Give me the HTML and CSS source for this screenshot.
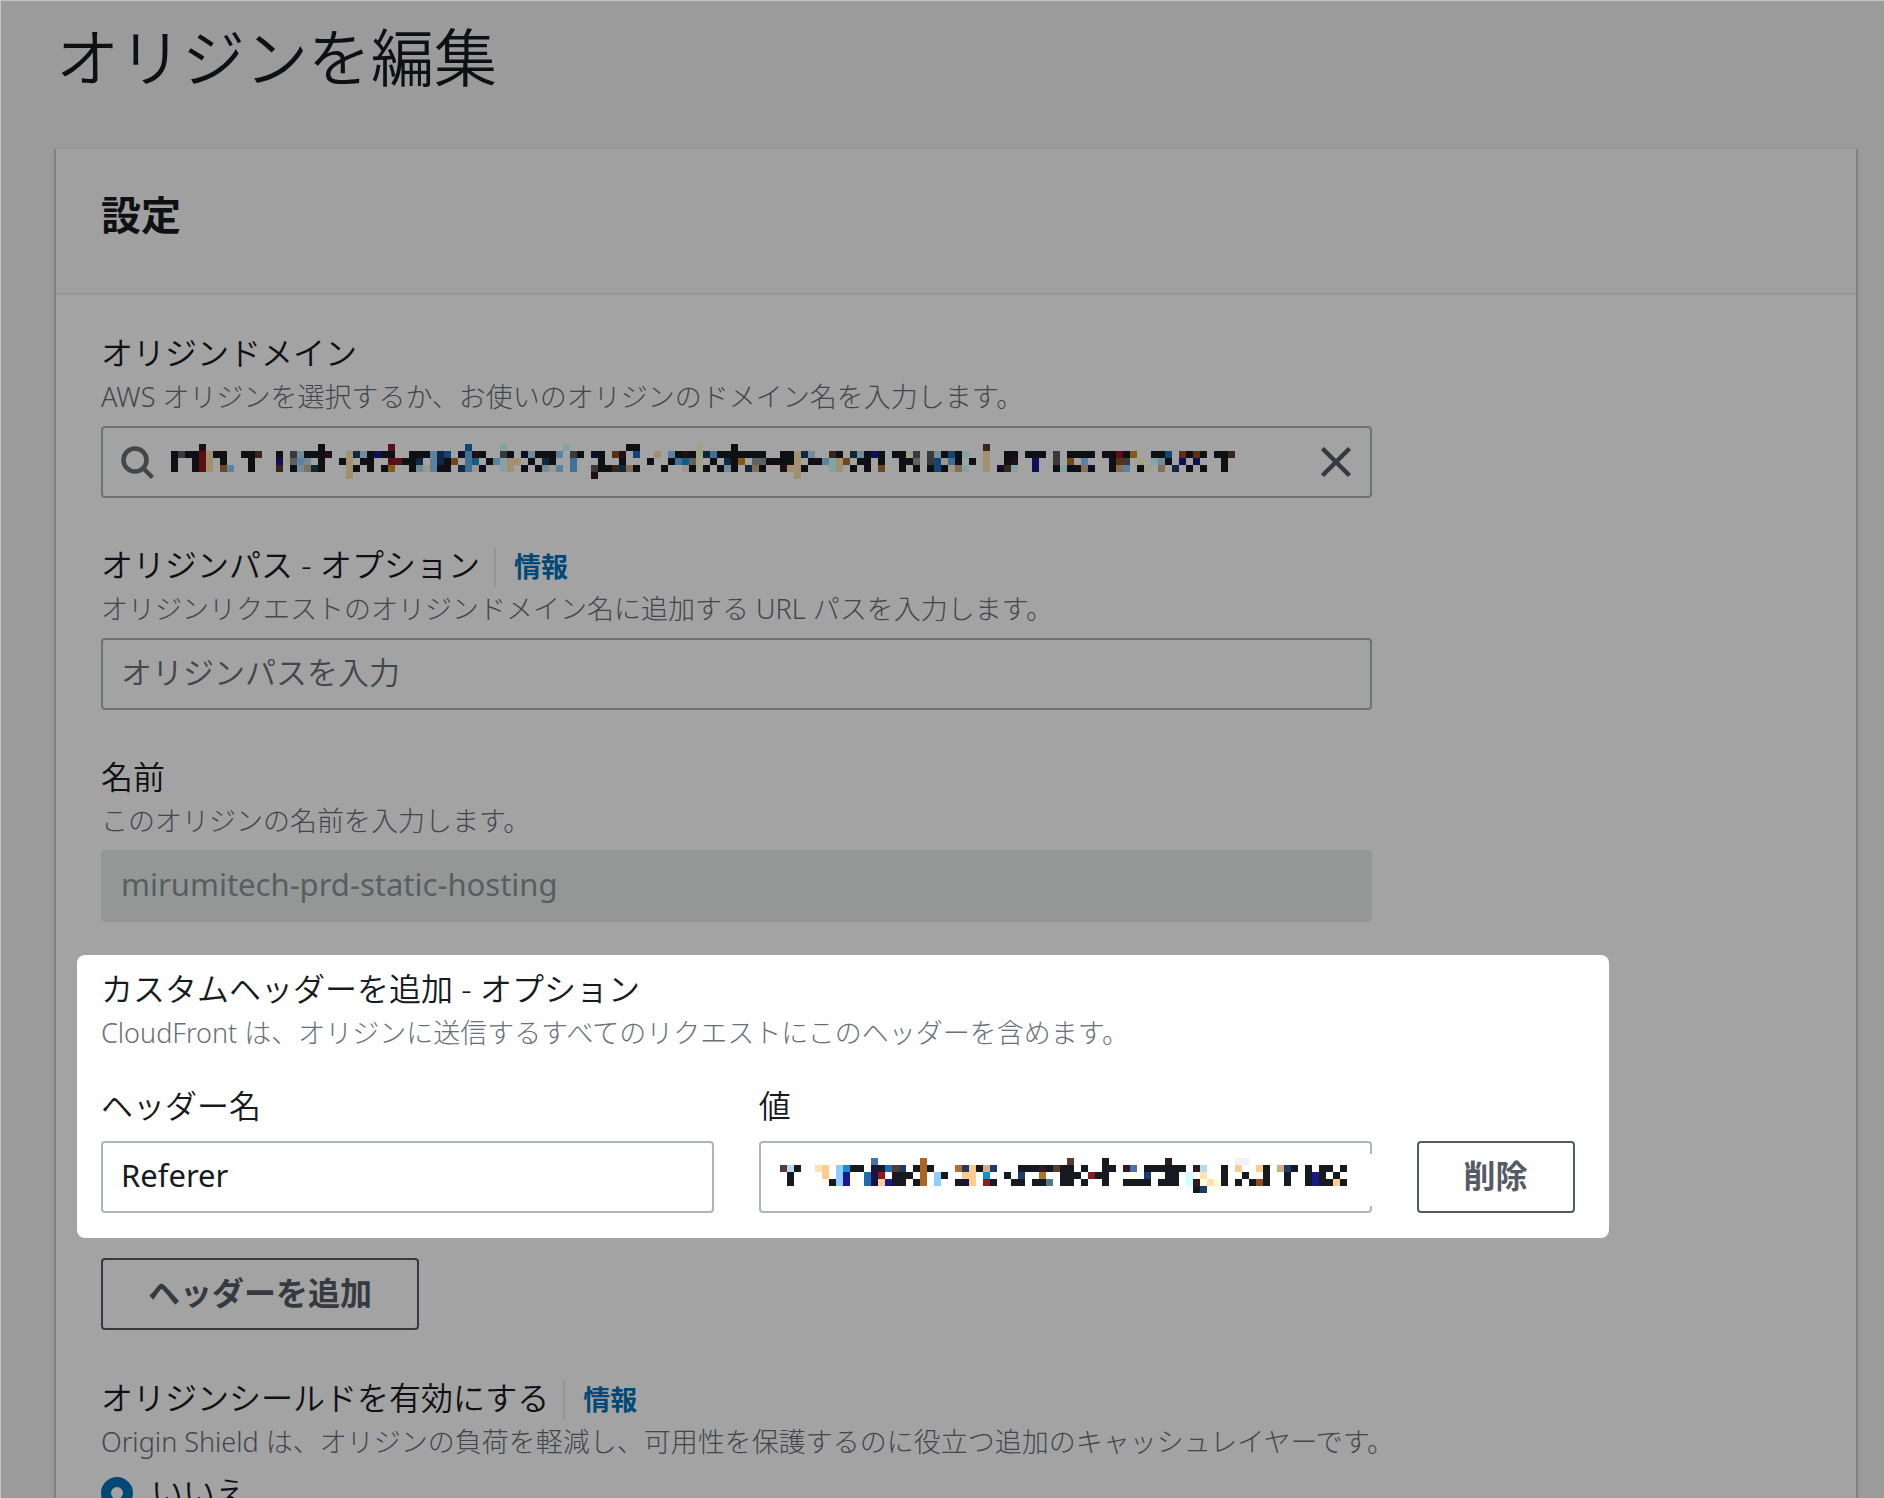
FILE: index.html
```html
<!DOCTYPE html>
<html lang="ja">
<head>
  <meta charset="UTF-8" />
  <meta name="viewport" content="width=device-width, initial-scale=1" />
  <title>オリジンを編集</title>
  <link rel="stylesheet" href="styles.css">
</head>
<body>
  <main class="page">
    <h1>オリジンを編集</h1>
    <form class="panel" id="originForm">
      <div class="panel-header">
        <h2>設定</h2>
      </div>
      <div class="panel-body">
        <div class="field">
          <div class="label-row"><label for="domain">オリジンドメイン</label></div>
          <p class="hint">AWS オリジンを選択するか、お使いのオリジンのドメイン名を入力します。</p>
          <div class="control">
            <input type="text" id="domain" name="domain" />
            <svg class="search-icon" viewBox="0 0 34 34" aria-hidden="true">
              <circle cx="14" cy="14" r="11.5" />
              <path d="M22 22 L31.500 31.500" />
            </svg>
            <svg class="mosaic" id="domainMask" aria-hidden="true"></svg>
            <button type="button" class="clear" aria-label="クリア">
              <svg viewBox="0 0 32 32" aria-hidden="true"><path d="M2.500 2.500 L29.500 29.500 M29.500 2.500 L2.500 29.500" /></svg>
            </button>
          </div>
        </div>

        <div class="field">
          <div class="label-row">
            <label for="path">オリジンパス - オプション</label>
            <a class="info" href="#">情報</a>
          </div>
          <p class="hint">オリジンリクエストのオリジンドメイン名に追加する URL パスを入力します。</p>
          <input type="text" id="path" name="path" placeholder="オリジンパスを入力" />
        </div>

        <div class="field">
          <div class="label-row"><label for="name">名前</label></div>
          <p class="hint">このオリジンの名前を入力します。</p>
          <input type="text" id="name" name="name" value="mirumitech-prd-static-hosting" disabled />
        </div>

        <section class="custom-headers">
          <h3>カスタムヘッダーを追加 - オプション</h3>
          <p class="hint">CloudFront は、オリジンに送信するすべてのリクエストにこのヘッダーを含めます。</p>
          <div class="header-row">
            <div class="header-pair">
              <div class="header-field">
                <label for="headerName">ヘッダー名</label>
                <input type="text" id="headerName" name="headerName" value="Referer" />
              </div>
              <div class="header-field">
                <label for="headerValue">値</label>
                <div class="control">
                  <input type="text" id="headerValue" name="headerValue" />
                  <div class="mask">
                    <svg class="mosaic" id="valueMask" aria-hidden="true"></svg>
                  </div>
                </div>
              </div>
            </div>
            <button type="button" class="btn">削除</button>
          </div>
        </section>

        <button type="button" class="btn">ヘッダーを追加</button>

        <fieldset class="shield">
          <div class="label-row">
            <span id="shieldLabel">オリジンシールドを有効にする</span>
            <a class="info" href="#">情報</a>
          </div>
          <p class="hint">Origin Shield は、オリジンの負荷を軽減し、可用性を保護するのに役立つ追加のキャッシュレイヤーです。</p>
          <label class="radio" for="shieldNo">
            <input type="radio" id="shieldNo" name="shield" value="no" checked />
            いいえ
          </label>
        </fieldset>
      </div>
    </form>
  </main>

  <script src="mosaic.js"></script>
</body>
</html>
```
FILE: styles.css
```css
* {
  box-sizing: border-box;
}
body {
  margin: 0;
  height: 100vh;
  overflow: hidden;
  position: relative;
  background: #f2f3f3;
  color: #16191f;
  font-family: "Noto Sans", "Noto Sans CJK JP", sans-serif;
  font-size: 32px;
  line-height: 44px;
}
/* light hairline round the top left of the window */
body::after {
  content: "";
  position: absolute;
  inset: 0;
  z-index: 3;
  border-top: 1px solid #c4c6c6;
  border-left: 1px solid #c4c6c6;
  pointer-events: none;
}
.page {
  padding: 17px 28px 0 56px;
}
h1 {
  margin: 0 0 50px;
  font-size: 63px;
  font-weight: 350;
  line-height: 80px;
}
h2 {
  margin: 0;
  font-size: 40px;
  font-weight: 700;
  line-height: 56px;
}
h3 {
  margin: 0;
  font-size: 32px;
  font-weight: 350;
  line-height: 44px;
}
.panel {
  background: #fff;
  border-top: 2px solid #eaeded;
  box-shadow: 0 2px 2px rgba(0, 28, 36, 0.3), 2px 2px 2px rgba(0, 28, 36, 0.15), -2px 2px 2px rgba(0, 28, 36, 0.15);
}
.panel-header {
  padding: 38px 45px 50px;
  background: #fafafa;
  border-bottom: 2px solid #eaeded;
}
.panel-body {
  padding: 36px 45px 45px;
}
.field {
  width: calc(75% - 12px);
  margin-bottom: 45px;
}
.label-row {
  display: flex;
  align-items: baseline;
  height: 44px;
  font-weight: 350;
}
label {
  font-weight: 350;
}
.hint {
  margin: 0 0 7px;
  color: #687078;
  font-size: 27px;
  font-weight: 300;
  line-height: 44px;
}
.info {
  margin-left: 14px;
  padding-left: 18px;
  border-left: 2px solid #eaeded;
  color: #0073bb;
  font-size: 27px;
  font-weight: 700;
  line-height: 40px;
  text-decoration: none;
}
input[type="text"] {
  display: block;
  width: 100%;
  height: 72px;
  padding: 0 18px 4px;
  border: 2px solid #aab7b8;
  border-radius: 4px;
  background: #fff;
  color: #16191f;
  font: inherit;
  font-size: 31px;
}
input::placeholder {
  color: #687078;
  font-weight: 350;
  opacity: 1;
}
input[type="text"]:disabled {
  border-color: #eaeded;
  background: #eaeded;
  color: #879596;
}
.control {
  position: relative;
}
.search-icon {
  position: absolute;
  left: 20px;
  top: 20px;
  width: 34px;
  height: 34px;
  fill: none;
  stroke: #687078;
  stroke-width: 4.500;
}
.control > .mosaic {
  position: absolute;
  left: 70px;
  top: 18px;
}
.mosaic {
  display: block;
}
.clear {
  position: absolute;
  right: 20px;
  top: 20px;
  width: 32px;
  height: 32px;
  padding: 0;
  border: none;
  background: none;
  cursor: pointer;
}
.clear svg {
  display: block;
  width: 32px;
  height: 32px;
  fill: none;
  stroke: #545b64;
  stroke-width: 4.500;
}
.mask {
  position: absolute;
  left: 20px;
  right: 0;
  top: 13px;
  height: 52px;
  padding: 4px 0 0 1px;
  background: #fff;
}
.btn {
  height: 72px;
  padding: 0 45px 2px;
  border: 2px solid #545b64;
  border-radius: 4px;
  background: #fff;
  color: #545b64;
  font: inherit;
  font-weight: 700;
  cursor: pointer;
}
.custom-headers {
  position: relative;
  margin-bottom: 45px;
}
/* spotlight: everything outside this box is dimmed */
.custom-headers::after {
  content: "";
  position: absolute;
  z-index: 2;
  left: -24px;
  right: 202px;
  top: -12px;
  bottom: -25px;
  border-radius: 8px;
  box-shadow: 0 0 0 3000px rgba(0, 0, 0, 0.36);
  pointer-events: none;
}
.header-row {
  display: flex;
  align-items: flex-end;
  gap: 45px;
  margin-top: 29px;
}
.custom-headers .hint {
  margin-bottom: 0;
}
.header-pair {
  display: flex;
  gap: 45px;
  width: calc(75% - 12px);
}
.header-field {
  flex: 1;
}
.header-field label {
  display: block;
  margin-bottom: 13px;
}
.shield {
  min-width: 0;
  margin: 46px 0 0;
  padding: 0;
  border: none;
}
.radio {
  display: flex;
  align-items: center;
  gap: 18px;
}
.radio input {
  appearance: none;
  width: 32px;
  height: 32px;
  margin: 0;
  border: 10px solid #0073bb;
  border-radius: 50%;
  background: #fff;
}
```
FILE: mosaic.js
```js
// Pixelated values: each entry is a list of "column:colours" runs for one row
const CELL = 7;
const colors = {
  k: '#16191f', d: '#585c5e', g: '#959699', t: '#ffe2ae', b: '#90ccff', c: '#cfffff',
  n: '#16163c', N: '#1c3d6a', r: '#901820', m: '#321a22', o: '#904c1e', u: '#1c6db8',
  v: '#62b0ee', i: '#181890', y: '#fdfdd4', s: '#b4dcf0', w: '#f6ecdc', e: '#168fd0',
  z: '#b0702e', a: '#ca901e', q: '#583c2e', x: '#d0ae86', T: '#16404e',
  p: '#ffcc90', f: '#fffee8', h: '#f0f0f8', O: '#ae661e', l: '#4a72a6', j: '#4c7c80'
};

const domainRows = [
  '4:m 21:k 31:r 42:u 47:c 56:c 65:kk 75:y 80:k 116:q',
  '0:kdkkrtkk 10:kkq 15:k 17:dskkkm 25:tNskikk 34:kkkbNu 41:nvmk 47:dk 50:nskkkb 57:dk 60:nk 63:om 66:u 69:t 71:bkmkyTvkkkkkkk 87:kktNs 94:qk 97:Tskik 103:kkyd 108:dskukc 116:t 119:kk 122:kkk 126:d 128:kkkk 133:kkrka 140:kku 144:okok 149:kkq',
  '0:k 3:krt 7:k 11:k 15:iygbs 21:k 24:kt 27:kk 31:rrk 34:kN 37:bNkz 42:ve 45:kbctt 51:k 53:Nk 57:v 61:k 64:k 68:k 71:kvegy 77:k 79:Nka 83:ggkkkkt 91:kkbctz 98:kk 101:k 104:kkg 108:duwvk 114:k 116:t 119:km 123:i 126:d 128:z 130:b 134:kod 138:y 140:csk 144:i 146:i 150:k',
  '0:k 3:krt 7:zb 11:k 15:q 17:ksxTk 25:tk 28:k 30:ka 34:kswbkk 41:Nvwn 47:ct 50:k 52:kswb 57:v 60:dkkqNxk 70:k 73:wkyk 78:ksk 82:Nxk 87:mttk 94:ct 97:k 99:k 101:z 104:k 106:k 108:kukwxc 116:t 118:nqc 123:i 126:kckkxn 134:kxb 138:ky 141:x 143:N 145:k 147:k 150:k',
  '25:t 60:m 89:t'
];

const valueRows = [
  '13:l 20:O 41:q 46:k 55:m 65:hh',
  '0:qsk 5:tp 8:bekk 13:nkuqN 19:kOk 25:zNpkxN 34:kkkmkqkk 43:k 46:kk 49:ml 52:kkkkkk 59:ms 63:k 65:p 68:pk 71:xNk 75:k 77:kk 80:k',
  '1:k 6:p 8:bif 12:unr 16:kkk 20:O 22:bk 26:pp 29:e 32:k 34:N 37:z 40:kkk 44:rkk 50:f 52:N 55:kk 58:c 60:t 63:k 66:k 68:fk 72:k 75:kik 79:k',
  '1:k 6:fkbif 12:unpikkfkO 22:b 25:knp 29:rk 33:kk 36:kkj 40:kk 43:k 46:k 49:kkkk 54:kkk 58:cmytyk 65:k 67:kok 72:k 75:kikkpk',
  '59:kN'
];

function drawMosaic(id, rows) {
  const svg = document.getElementById(id);
  let cols = 0;
  rows.forEach((row, y) => {
    row.split(' ').forEach((run) => {
      const [start, cells] = run.split(':');
      [...cells].forEach((cell, i) => {
        const rect = document.createElementNS('http://www.w3.org/2000/svg', 'rect');
        const x = Number(start) + i;
        rect.setAttribute('x', x * CELL);
        rect.setAttribute('y', y * CELL);
        rect.setAttribute('width', CELL);
        rect.setAttribute('height', CELL);
        rect.setAttribute('fill', colors[cell]);
        svg.appendChild(rect);
        cols = Math.max(cols, x + 1);
      });
    });
  });
  svg.setAttribute('width', cols * CELL);
  svg.setAttribute('height', rows.length * CELL);
  svg.setAttribute('shape-rendering', 'crispEdges');
}

drawMosaic('domainMask', domainRows);
drawMosaic('valueMask', valueRows);
```
